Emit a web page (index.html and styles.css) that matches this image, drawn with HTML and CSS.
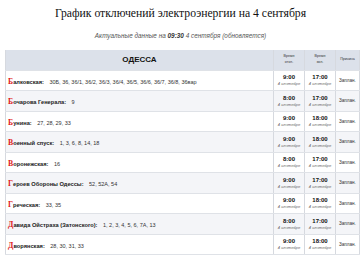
FILE: index.html
```html
<!DOCTYPE html>
<html lang="ru">
<head>
<meta charset="utf-8">
<title>График отключений</title>
<link rel="stylesheet" href="styles.css">
</head>
<body>
<div class="page">
  <h1 class="title">График отключений электроэнергии на 4 сентября</h1>
  <p class="subtitle">Актуальные данные на <b>09:30</b> 4 сентября (обновляется)</p>
  <table class="grid">
    <thead>
      <tr class="head">
        <th class="c-street">ОДЕССА</th>
        <th class="c-time">Время<br>откл.</th>
        <th class="c-time">Время<br>вкл.</th>
        <th class="c-reason">Причина</th>
      </tr>
    </thead>
    <tbody>
      <tr><td class="c-street"><span class="cap">Б</span><span class="name">алковская:</span> <span class="nums">30Б, 36, 36/1, 36/2, 36/3, 36/4, 36/5, 36/6, 36/7, 36/8, 36вар</span></td><td class="c-time"><b>9:00</b><i>4 сентября</i></td><td class="c-time"><b>17:00</b><i>4 сентября</i></td><td class="c-reason">Заплан.</td></tr>
      <tr><td class="c-street"><span class="cap">Б</span><span class="name">очарова Генерала:</span> <span class="nums">9</span></td><td class="c-time"><b>8:00</b><i>4 сентября</i></td><td class="c-time"><b>17:00</b><i>4 сентября</i></td><td class="c-reason">Заплан.</td></tr>
      <tr><td class="c-street"><span class="cap">Б</span><span class="name">унина:</span> <span class="nums">27, 28, 29, 33</span></td><td class="c-time"><b>9:00</b><i>4 сентября</i></td><td class="c-time"><b>18:00</b><i>4 сентября</i></td><td class="c-reason">Заплан.</td></tr>
      <tr><td class="c-street"><span class="cap">В</span><span class="name">оенный спуск:</span> <span class="nums">1, 3, 6, 8, 14, 18</span></td><td class="c-time"><b>9:00</b><i>4 сентября</i></td><td class="c-time"><b>18:00</b><i>4 сентября</i></td><td class="c-reason">Заплан.</td></tr>
      <tr><td class="c-street"><span class="cap">В</span><span class="name">оронежская:</span> <span class="nums">16</span></td><td class="c-time"><b>8:00</b><i>4 сентября</i></td><td class="c-time"><b>17:00</b><i>4 сентября</i></td><td class="c-reason">Заплан.</td></tr>
      <tr><td class="c-street"><span class="cap">Г</span><span class="name">ероев Обороны Одессы:</span> <span class="nums">52, 52А, 54</span></td><td class="c-time"><b>9:00</b><i>4 сентября</i></td><td class="c-time"><b>17:00</b><i>4 сентября</i></td><td class="c-reason">Заплан.</td></tr>
      <tr><td class="c-street"><span class="cap">Г</span><span class="name">реческая:</span> <span class="nums">33, 35</span></td><td class="c-time"><b>9:00</b><i>4 сентября</i></td><td class="c-time"><b>18:00</b><i>4 сентября</i></td><td class="c-reason">Заплан.</td></tr>
      <tr><td class="c-street"><span class="cap">Д</span><span class="name">авида Ойстраха (Затонского):</span> <span class="nums">1, 2, 3, 4, 5, 6, 7А, 13</span></td><td class="c-time"><b>8:00</b><i>4 сентября</i></td><td class="c-time"><b>17:00</b><i>4 сентября</i></td><td class="c-reason">Заплан.</td></tr>
      <tr><td class="c-street"><span class="cap">Д</span><span class="name">ворянская:</span> <span class="nums">28, 30, 31, 33</span></td><td class="c-time"><b>9:00</b><i>4 сентября</i></td><td class="c-time"><b>18:00</b><i>4 сентября</i></td><td class="c-reason">Заплан.</td></tr>
    </tbody>
  </table>
</div>
</body>
</html>
```

FILE: styles.css
```css
html, body {
  margin: 0;
  padding: 0;
  background: #ffffff;
}

.page {
  padding: 6px 4px 0 5px;
  font-family: "Liberation Sans", Arial, sans-serif;
  color: #222;
}

.title {
  margin: 0;
  font-family: "Liberation Serif", "Times New Roman", serif;
  font-weight: normal;
  font-size: 11.7px;
  line-height: 16px;
  text-align: center;
  color: #111;
}

.subtitle {
  margin: 10px 0 0;
  font-size: 6.4px;
  line-height: 8px;
  font-style: italic;
  text-align: center;
  color: #555;
}

.subtitle b {
  color: #333;
}

.grid {
  margin-top: 10px;
  width: 351px;
  border-collapse: collapse;
  table-layout: fixed;
  border-left: 1px solid #d6d9df;
}

.grid th,
.grid td {
  padding: 0;
  border-bottom: 1px solid #dfe2e7;
  border-right: 1px solid #d6d9df;
  vertical-align: middle;
}

.head {
  height: 20px;
  background: #dce1ea;
}

.head th {
  font-size: 3.6px;
  line-height: 5.5px;
  font-weight: normal;
  color: #333;
  text-align: center;
}

.head th.c-street {
  font-size: 8px;
  line-height: 10px;
  font-weight: bold;
  color: #111;
  text-align: center;
}

.c-street { width: 267px; text-align: left; }
.c-time { width: 30px; text-align: center; }
.c-reason { width: 23px; }

.grid tbody tr {
  height: 20.5px;
}

.grid tbody tr:nth-child(even) {
  background: #f4f5f8;
}

.grid td.c-street {
  padding-left: 2px;
  white-space: nowrap;
  line-height: 9px;
}

.cap {
  font-family: "Liberation Serif", "Times New Roman", serif;
  font-weight: bold;
  font-size: 7.8px;
  color: #e01b1b;
}

.name {
  font-weight: bold;
  font-size: 5.7px;
  color: #222;
}

.nums {
  font-size: 5.5px;
  color: #333;
  margin-left: 1px;
}

.c-time b {
  display: block;
  font-size: 6px;
  line-height: 7px;
  color: #111;
}

.c-time i {
  display: block;
  font-size: 4.1px;
  line-height: 5px;
  color: #666;
  white-space: nowrap;
}

.grid td.c-reason {
  font-size: 4.6px;
  padding-left: 3px;
  color: #333;
}
```
